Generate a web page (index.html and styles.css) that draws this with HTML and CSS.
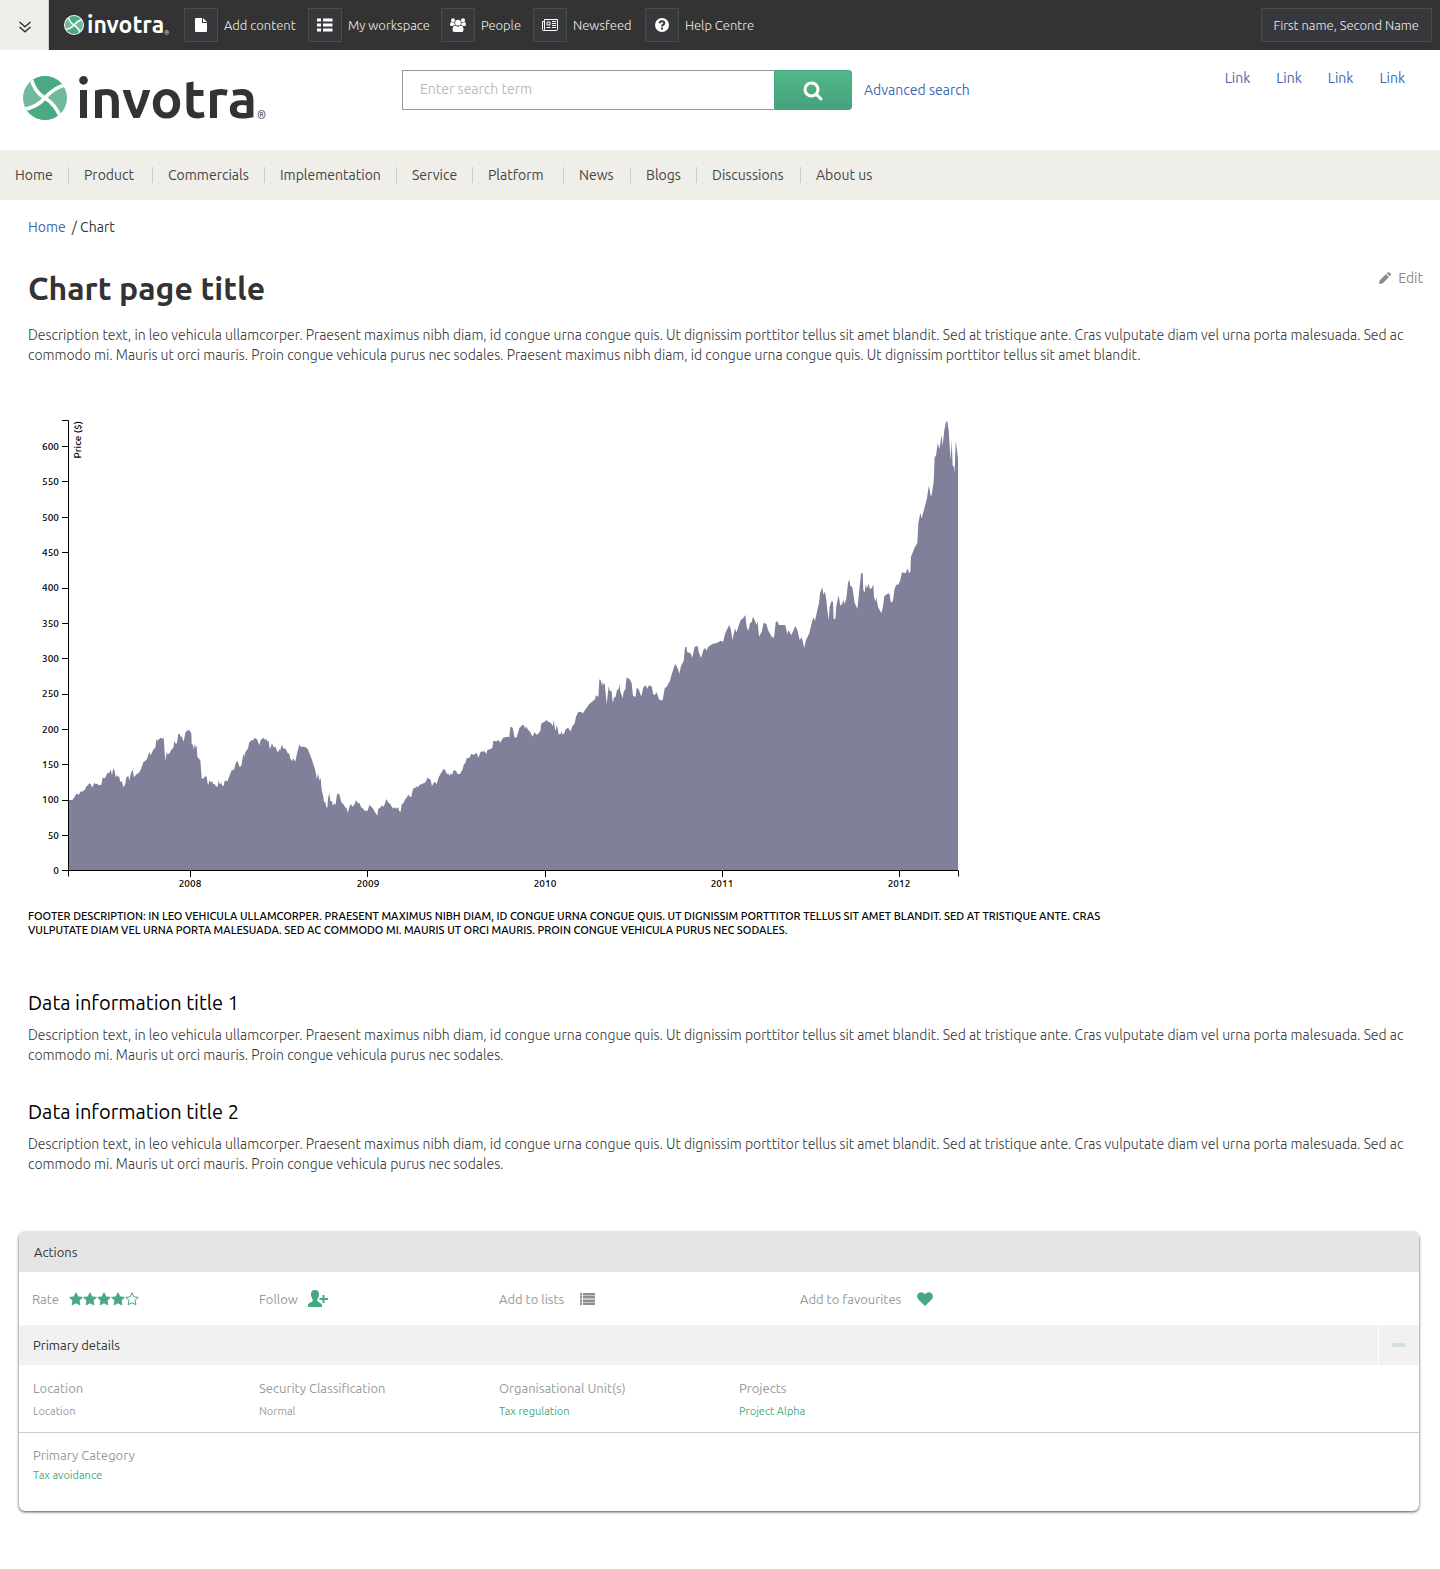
FILE: index.html
```html
<!DOCTYPE html>
<html lang="en">
<head>
<meta charset="utf-8">
<title>Chart page title</title>
<meta name="viewport" content="width=device-width, initial-scale=1">
<link rel="stylesheet" href="styles.css">
</head>
<body>
<svg class="defs" width="0" height="0" aria-hidden="true">
  <symbol id="emblem" viewBox="69 227 132 132">
    <clipPath id="disc"><circle cx="135" cy="293" r="66"/></clipPath>
    <g clip-path="url(#disc)">
      <rect x="69" y="227" width="132" height="132" fill="#6fba9a"/>
      <path fill="#4ba983" d="M90 220C98 265 118 284 135 293C150 275 170 257 205 251L205 220ZM65 328C100 325 120 310 135 293C155 305 172 322 184 355L184 370L65 370Z"/>
      <path class="emblem-gap" fill="none" stroke-width="11" d="M90 220C98 265 118 284 135 293C155 305 172 322 186 362M205 251C170 257 150 275 135 293C120 310 100 325 62 329"/>
    </g>
  </symbol>
  <symbol id="star" viewBox="0 0 14 14"><path stroke="#45a880" stroke-linejoin="round" d="M7 0.800L8.900 4.900L13.300 5.400L10 8.400L10.900 12.900L7 10.700L3.100 12.900L4 8.400L0.700 5.400L5.100 4.900Z"/></symbol>
</svg>

<div class="topbar">
  <button class="collapse" type="button" aria-label="Collapse toolbar">
    <svg width="12" height="12" viewBox="0 0 12 12" fill="none" stroke="#333" stroke-width="1.500"><path d="M0.500 1L6 5.800L11.500 1M0.500 6L6 10.800L11.500 6"/></svg>
  </button>
  <a class="brand brand-small" href="#"><svg class="emblem" width="20" height="20"><circle cx="10" cy="10" r="10" fill="#fff"/><use href="#emblem" x="1" y="1" width="18" height="18"/></svg><span class="wordmark">invotra</span><span class="reg">®</span></a>
  <nav class="tools" aria-label="Tools">
    <a href="#"><span class="tile"><svg width="12" height="14" viewBox="0 0 12 14" fill="#fff"><path d="M1 0H7V5H12V13Q12 14 11 14H1Q0 14 0 13V1Q0 0 1 0ZM8 0L12 4H8Z"/></svg></span>Add content</a>
    <a href="#"><span class="tile"><svg width="16" height="14" viewBox="0 0 16 14" fill="#fff"><path d="M0 0.500H4V3.500H0ZM6 0.500H15.500V3.500H6ZM0 5.500H4V8.500H0ZM6 5.500H15.500V8.500H6ZM0 10.500H4V13.500H0ZM6 10.500H15.500V13.500H6Z"/></svg></span>My workspace</a>
    <a href="#"><span class="tile"><svg width="16" height="14" viewBox="0 0 16 14" fill="#fff"><circle cx="3" cy="2.300" r="2"/><circle cx="13" cy="2.300" r="2"/><path d="M1.600 4C3 5 4 4.600 4.600 4.200C4.200 5.500 4.600 6.500 5.200 7C4 7 3.400 7.300 3 8H1.500Q0 8 0 6.500Q0 4 1.600 4ZM14.400 4C13 5 12 4.600 11.400 4.200C11.800 5.500 11.400 6.500 10.800 7C12 7 12.600 7.300 13 8H14.500Q16 8 16 6.500Q16 4 14.400 4Z"/><circle cx="8" cy="4.700" r="2.900"/><path d="M5 7.600Q8 9.800 11 7.600Q13.500 8 13.500 12Q13.500 14 11.500 14H4.500Q2.500 14 2.500 12Q2.500 8 5 7.600Z"/></svg></span>People</a>
    <a href="#"><span class="tile"><svg width="16" height="12" viewBox="0 0 16 12" fill="none" stroke="#fff"><path d="M2.500 0.500H15.500V10.500Q15.500 11.500 14.500 11.500H1.500Q0.500 11.500 0.500 10.500V2.500H2.500M2.500 0.500V10.500Q2.500 11.500 1.500 11.500M5 3H8V6H5ZM4.500 8.500H8.500M10 2.500H14M10 4.500H14M10 6.500H14M10 8.500H14"/></svg></span>Newsfeed</a>
    <a href="#"><span class="tile"><svg width="14" height="14" viewBox="0 0 14 14"><circle cx="7" cy="7" r="7" fill="#fff"/><path fill="none" stroke="#37383c" stroke-width="2" d="M4.500 5.200C4.800 3.800 5.800 3.300 7 3.300C8.500 3.300 9.300 4.200 9.300 5.200C9.300 6.700 7 6.700 7 8.600M7 9.600V11.500"/></svg></span>Help Centre</a>
  </nav>
  <button class="user" type="button">First name, Second Name</button>
</div>

<header class="header">
  <a class="brand" href="#"><svg class="emblem" width="44" height="44"><use href="#emblem" width="44" height="44"/></svg><span class="wordmark">invotra</span><span class="reg">®</span></a>
  <form class="search" role="search">
    <input type="search" placeholder="Enter search term" aria-label="Enter search term">
    <button type="button" aria-label="Search"><svg width="20" height="20" viewBox="0 0 20 20" fill="none" stroke="#fff" stroke-width="3"><circle cx="8.500" cy="8.500" r="6.500"/><path stroke-linecap="round" d="M13.500 13.500L18 18"/></svg></button>
  </form>
  <a class="advanced" href="#">Advanced search</a>
  <nav class="links" aria-label="Quick links"><a href="#">Link</a><a href="#">Link</a><a href="#">Link</a><a href="#">Link</a></nav>
</header>

<nav class="mainnav" aria-label="Main">
  <a href="#">Home</a><a href="#">Product</a><a href="#">Commercials</a><a href="#">Implementation</a><a href="#">Service</a><a href="#">Platform</a><a href="#">News</a><a href="#">Blogs</a><a href="#">Discussions</a><a href="#">About us</a>
</nav>

<main class="content">
  <nav class="crumbs" aria-label="Breadcrumb"><a href="#">Home</a><span>/ Chart</span></nav>
  <div class="titlebar">
    <h1>Chart page title</h1>
    <a class="edit" href="#"><svg width="12" height="12" viewBox="0 0 12 12" fill="#8a8a8a"><path d="M0 12L0.800 8.200L7 2L10 5L3.800 11.200ZM7.800 1.200L8.900 0.300Q9.700 -0.300 10.400 0.400L11.600 1.600Q12.300 2.300 11.700 3.100L10.800 4.200Z"/></svg>Edit</a>
  </div>
  <p>Description text, in leo vehicula ullamcorper. Praesent maximus nibh diam, id congue urna congue quis. Ut dignissim porttitor tellus sit amet blandit. Sed at tristique ante. Cras vulputate diam vel urna porta malesuada. Sed ac commodo mi. Mauris ut orci mauris. Proin congue vehicula purus nec sodales. Praesent maximus nibh diam, id congue urna congue quis. Ut dignissim porttitor tellus sit amet blandit.</p>

  <figure class="chart">
    <svg width="940" height="480" viewBox="28 412 940 480" role="img" aria-label="Price in dollars, 2007 to 2012">
      <svg x="68" y="410" width="890" height="460" viewBox="144 -840 2670 1380" preserveAspectRatio="none">
        <path fill="#80809b" d="M144 540L144 330 157 330 163 322 168 313 173 311 176 315 181 306 186 303 188 306 191 301 195 300 198 290 202 287 209 279 213 284 217 293 223 278 227 282 232 281 236 286 244 284 248 263 255 265 262 250 268 248 272 238 276 256 280 235 284 243 287 262 291 255 294 262 297 257 301 277 305 272 310 292 316 282 318 264 325 257 328 272 332 252 338 238 342 262 350 252 357 248 364 235 370 217 380 209 388 186 392 196 401 177 406 174 409 148 413 152 421 143 430 147 431 138 434 190 437 213 440 185 443 193 449 190 453 181 460 173 463 154 468 162 471 158 475 131 479 132 483 142 485 138 491 155 496 128 503 120 508 121 514 130 515 162 519 165 521 178 525 162 527 175 530 166 532 200 541 211 545 265 550 266 556 258 560 262 564 286 569 271 573 277 577 274 579 282 583 281 588 289 593 290 596 270 599 283 604 279 606 286 611 288 614 272 623 273 629 256 635 241 639 241 643 236 648 217 653 213 658 230 664 228 670 191 673 200 676 187 684 175 688 157 695 151 700 150 704 143 711 148 718 166 722 150 731 143 735 150 739 146 742 155 746 152 749 177 752 172 756 160 762 173 766 169 772 186 776 183 778 176 780 182 786 163 789 174 798 178 803 190 808 191 811 206 817 213 820 205 826 215 830 195 838 163 842 170 852 170 862 175 868 189 875 207 881 225 887 245 890 268 894 250 898 271 902 265 905 300 910 320 912 335 916 337 919 352 922 353 924 325 928 310 931 332 937 335 938 347 943 340 947 345 950 318 953 310 958 313 960 320 964 337 972 345 975 352 980 353 983 370 987 355 992 342 998 350 1002 345 1005 340 1008 330 1014 340 1019 340 1023 352 1028 355 1034 362 1043 362 1048 345 1058 354 1064 365 1072 377 1074 358 1082 352 1084 346 1088 350 1093 346 1099 327 1104 336 1111 343 1119 356 1125 351 1128 356 1135 352 1137 362 1142 365 1145 343 1151 339 1154 330 1161 322 1165 313 1169 320 1174 320 1178 300 1182 293 1186 295 1188 289 1194 292 1198 285 1207 281 1217 277 1223 262 1227 268 1231 267 1236 288 1243 275 1250 282 1256 262 1264 248 1271 237 1275 239 1281 253 1285 250 1288 257 1293 250 1296 256 1301 240 1308 243 1313 252 1320 252 1327 240 1332 222 1336 220 1340 205 1349 203 1353 192 1362 194 1370 188 1375 203 1382 185 1394 184 1399 192 1402 180 1410 178 1417 174 1420 153 1431 154 1436 150 1441 158 1449 143 1462 140 1468 142 1471 110 1478 113 1484 143 1490 142 1498 115 1507 105 1512 106 1515 117 1518 109 1524 119 1529 124 1538 140 1543 127 1548 132 1552 134 1561 123 1564 100 1573 96 1579 90 1585 95 1592 98 1599 108 1601 90 1606 123 1611 105 1616 133 1622 132 1624 123 1627 133 1633 130 1637 118 1644 113 1652 124 1657 109 1664 100 1668 80 1675 65 1683 66 1689 70 1695 60 1708 42 1725 28 1728 16 1735 21 1738 -32 1743 -28 1746 -12 1749 -24 1751 -16 1754 -20 1760 42 1766 -12 1769 2 1775 4 1778 38 1783 22 1787 20 1791 0 1796 -2 1798 -18 1801 4 1808 25 1811 5 1816 -2 1820 -38 1829 -32 1835 -20 1839 18 1847 20 1850 -7 1856 -2 1864 20 1870 -8 1878 -14 1881 -3 1887 -14 1896 -10 1899 12 1904 15 1910 7 1918 30 1928 31 1934 -5 1940 -10 1950 -28 1956 -50 1965 -78 1972 -68 1978 -49 1983 -72 1991 -87 1995 -128 1999 -130 2002 -113 2012 -110 2017 -97 2024 -130 2033 -132 2036 -115 2043 -96 2051 -122 2056 -126 2059 -118 2065 -130 2077 -138 2092 -142 2102 -148 2109 -144 2115 -168 2122 -184 2128 -195 2133 -180 2137 -150 2145 -185 2149 -172 2155 -190 2162 -210 2169 -215 2176 -225 2180 -190 2185 -177 2190 -200 2195 -203 2199 -220 2206 -205 2210 -195 2213 -207 2217 -160 2225 -175 2231 -202 2239 -198 2245 -178 2254 -162 2260 -155 2263 -165 2267 -203 2272 -206 2277 -195 2296 -195 2302 -167 2306 -180 2314 -164 2326 -192 2332 -180 2339 -150 2345 -158 2353 -127 2358 -150 2368 -170 2373 -192 2380 -218 2385 -208 2392 -240 2397 -260 2400 -290 2407 -308 2410 -287 2415 -295 2419 -270 2422 -240 2426 -210 2429 -250 2435 -268 2439 -264 2441 -213 2446 -213 2449 -252 2456 -284 2461 -252 2467 -260 2470 -270 2474 -258 2479 -275 2484 -320 2488 -332 2491 -313 2497 -308 2504 -262 2512 -243 2517 -290 2523 -350 2528 -350 2530 -300 2534 -292 2537 -317 2540 -305 2546 -318 2550 -302 2556 -307 2560 -317 2562 -278 2567 -265 2569 -278 2574 -250 2584 -230 2589 -250 2593 -282 2602 -288 2608 -290 2613 -262 2619 -268 2623 -300 2628 -315 2636 -317 2641 -330 2646 -353 2657 -350 2663 -365 2667 -350 2671 -355 2673 -400 2683 -425 2692 -442 2695 -500 2701 -532 2705 -515 2714 -548 2721 -575 2726 -612 2729 -600 2732 -582 2735 -585 2741 -625 2744 -700 2748 -702 2753 -742 2758 -722 2765 -765 2768 -732 2773 -780 2778 -804 2782 -806 2786 -780 2789 -730 2792 -690 2795 -750 2798 -673 2802 -670 2804 -650 2807 -748 2811 -720 2814 -693V540Z"/>
      </svg>
      <path class="axis" d="M62 420.500H68.500V876.500M62 870.500H958.500V876.500M62 446.500H68M62 481.500H68M62 517.500H68M62 552.500H68M62 588.500H68M62 623.500H68M62 658.500H68M62 694.500H68M62 729.500H68M62 764.500H68M62 800.500H68M62 835.500H68M190.500 871V877M367.500 871V877M545.500 871V877M722.500 871V877M899.500 871V877"/>
      <g class="ticks ticks-y">
        <text x="59" y="450">600</text><text x="59" y="485">550</text><text x="59" y="521">500</text><text x="59" y="556">450</text><text x="59" y="591">400</text><text x="59" y="627">350</text><text x="59" y="662">300</text><text x="59" y="697">250</text><text x="59" y="733">200</text><text x="59" y="768">150</text><text x="59" y="803">100</text><text x="59" y="839">50</text><text x="59" y="874">0</text>
        <text transform="translate(81 421) rotate(-90)">Price ($)</text>
      </g>
      <g class="ticks ticks-x">
        <text x="190" y="887">2008</text><text x="368" y="887">2009</text><text x="545" y="887">2010</text><text x="722" y="887">2011</text><text x="899" y="887">2012</text>
      </g>
    </svg>
    <figcaption>Footer description: in leo vehicula ullamcorper. Praesent maximus nibh diam, id congue urna congue quis. Ut dignissim porttitor tellus sit amet blandit. Sed at tristique ante. Cras vulputate diam vel urna porta malesuada. Sed ac commodo mi. Mauris ut orci mauris. Proin congue vehicula purus nec sodales.</figcaption>
  </figure>

  <section class="info">
    <h2>Data information title 1</h2>
    <p>Description text, in leo vehicula ullamcorper. Praesent maximus nibh diam, id congue urna congue quis. Ut dignissim porttitor tellus sit amet blandit. Sed at tristique ante. Cras vulputate diam vel urna porta malesuada. Sed ac commodo mi. Mauris ut orci mauris. Proin congue vehicula purus nec sodales.</p>
  </section>
  <section class="info">
    <h2>Data information title 2</h2>
    <p>Description text, in leo vehicula ullamcorper. Praesent maximus nibh diam, id congue urna congue quis. Ut dignissim porttitor tellus sit amet blandit. Sed at tristique ante. Cras vulputate diam vel urna porta malesuada. Sed ac commodo mi. Mauris ut orci mauris. Proin congue vehicula purus nec sodales.</p>
  </section>
</main>

<section class="card">
  <h3 class="card-head">Actions</h3>
  <div class="actions">
    <div class="action">Rate<span class="stars" role="img" aria-label="4 out of 5 stars"><svg width="14" height="14" fill="#45a880"><use href="#star"/></svg><svg width="14" height="14" fill="#45a880"><use href="#star"/></svg><svg width="14" height="14" fill="#45a880"><use href="#star"/></svg><svg width="14" height="14" fill="#45a880"><use href="#star"/></svg><svg width="14" height="14" fill="none"><use href="#star"/></svg></span></div>
    <button class="action" type="button">Follow<svg width="20" height="18" viewBox="0 0 20 18" fill="#45a880"><path d="M7 0C9.700 0 11 1.500 11 4C11 6.500 10.200 8 9.400 9V11C10.400 12.500 14 13 14 15V17H0V15C0 13 3.600 12.500 4.600 11V9C3.800 8 3 6.500 3 4C3 1.500 4.300 0 7 0ZM14.500 5H16.500V8H20V10H16.500V13H14.500V10H11.500V8H14.500Z"/></svg></button>
    <button class="action action-wide" type="button">Add to lists<svg width="15" height="12" viewBox="0 0 15 12" fill="#8f8f8f"><path d="M0 0H2V2H0ZM3 0H15V2H3ZM0 3H2V5H0ZM3 3H15V5H3ZM0 7H2V9H0ZM3 7H15V9H3ZM0 10H2V12H0ZM3 10H15V12H3Z"/><path fill-opacity=".5" d="M0 2H2V3H0ZM3 2H15V3H3ZM0 5H2V7H0ZM3 5H15V7H3ZM0 9H2V10H0ZM3 9H15V10H3Z"/></svg></button>
    <button class="action action-wide" type="button">Add to favourites<svg width="16" height="14" viewBox="0 0 16 14" fill="#45a880"><path d="M8 14L1.500 7.500C-0.500 5.500 0 2.500 1.500 1.200C3.500 -0.500 6.500 0 8 2.500C9.500 0 12.500 -0.500 14.500 1.200C16 2.500 16.500 5.500 14.500 7.500Z"/></svg></button>
  </div>
  <div class="card-head card-subhead"><h3>Primary details</h3><button type="button" aria-label="Collapse primary details"><svg width="14" height="4"><rect width="14" height="4" rx="1" fill="#d5dfe3"/></svg></button></div>
  <dl class="details">
    <div><dt>Location</dt><dd>Location</dd></div>
    <div><dt>Security Classification</dt><dd>Normal</dd></div>
    <div><dt>Organisational Unit(s)</dt><dd><a href="#">Tax regulation</a></dd></div>
    <div><dt>Projects</dt><dd><a href="#">Project Alpha</a></dd></div>
  </dl>
  <dl class="details details-last">
    <div><dt>Primary Category</dt><dd><a href="#">Tax avoidance</a></dd></div>
  </dl>
</section>
</body>
</html>
```
FILE: styles.css
```css
* { box-sizing: border-box; }
body {
  margin: 0;
  background: #fff;
  color: #333;
  font: 14px/20px Ubuntu, "Noto Sans", sans-serif;
}
a { color: #3c68ae; text-decoration: none; }
button, input { font: inherit; color: inherit; margin: 0; padding: 0; border: 0; background: none; }
h1, h2, h3, p, dl, dd, figure { margin: 0; font-weight: inherit; }
h3 { font-size: 13px; }
.defs { display: block; height: 0; }

/* Top toolbar */
.topbar { display: flex; align-items: center; height: 50px; background: #333; color: #eee; font-size: 13px; font-weight: 300; }
.topbar a { color: #eee; }
.collapse { display: flex; align-items: center; justify-content: center; flex: none; width: 49px; height: 50px; padding: 4px 0 0 2px; background: #efeee9; border-right: 1px solid #d0d0cc; }
.tools { display: grid; grid-template-columns: 124px 133px 92px 112px auto; white-space: nowrap; }
.tools a { display: flex; align-items: center; gap: 6px; }
.tile { display: flex; align-items: center; justify-content: center; flex: none; width: 34px; height: 34px; background: #37383c; border: 1px solid #4b4b4b; }
.user { margin-left: auto; margin-right: 8px; height: 34px; padding: 0 12px 0 11px; background: #37383c; border: 1px solid #4b4b4b; font-weight: 300; }

/* Brand */
.brand { display: flex; align-items: center; }
.header .brand { margin-top: 3px; }
.brand .wordmark { margin-left: 9px; color: #333; font: 700 54px/50px Ubuntu, Roboto, sans-serif; }
.brand .reg { align-self: flex-end; color: #333; font-size: 11px; line-height: 16px; }
.brand .emblem { flex: none; }
.emblem-gap { stroke: #fff; }
.brand-small { width: 119px; margin-left: 15px; margin-right: 1px; }
.brand-small .wordmark { margin-left: 3px; color: #fff; font-size: 23px; line-height: 24px; }
.brand-small .reg { color: #fff; font-size: 6px; line-height: 8px; }

/* Header */
.header { display: grid; grid-template-columns: 379px 450px 1fr auto; align-items: start; height: 100px; padding: 20px 35px 0 23px; }
.search { display: flex; height: 40px; }
.search input { flex: 1; min-width: 0; padding: 0 17px 2px; border: 1px solid #979797; border-right: 0; appearance: none; }
.search input::placeholder { color: #bbb; opacity: 1; }
.search button { display: flex; align-items: center; justify-content: center; width: 78px; padding-top: 2px; background: linear-gradient(#51b788, #45a37c); border: 1px solid #45a880; border-radius: 0 3px 3px 0; }
.advanced { margin: 10px 0 0 12px; }
.links { display: flex; gap: 26px; margin-top: -2px; }

/* Main navigation */
.mainnav { display: grid; grid-template-columns: 69px 84px 112px 132px 76px 91px 67px 66px 104px auto; align-items: center; height: 50px; background: #efeee9; }
.mainnav a { padding-left: 15px; color: #444; line-height: 16px; border-right: 1px solid #ccc; }
.mainnav a:last-child { border-right: 0; }

/* Content */
.content { padding: 17px 17px 0 28px; }
.crumbs { display: flex; gap: 6px; }
.titlebar { display: flex; align-items: flex-start; justify-content: space-between; margin-top: 29px; }
h1 { color: #333; font-size: 32px; line-height: 44px; font-weight: 600; }
.edit { display: flex; align-items: center; gap: 7px; padding-top: 2px; color: #8a8a8a; }
.content p { color: #333; font-weight: 300; padding-right: 8px; }
.titlebar + p { margin-top: 15px; }
.chart { margin-top: 47px; }
.chart > svg { display: block; max-width: 100%; }
.axis { fill: none; stroke: #000; }
.ticks { fill: #000; font-size: 10px; font-weight: 500; }
.ticks-y { text-anchor: end; }
.ticks-x { text-anchor: middle; }
figcaption { max-width: 1110px; margin-top: 17px; color: #000; font-size: 11px; line-height: 14px; font-weight: 500; text-transform: uppercase; }
h2 { color: #000; font-size: 20px; line-height: 28px; }
.info { margin-top: 33px; }
.info p { margin-top: 8px; }
.chart + .info { margin-top: 52px; }

/* Details card */
.card { margin: 58px 21px 58px 19px; background: #fff; border-radius: 6px; overflow: hidden; box-shadow: 0 1px 3px rgba(0, 0, 0, .7); color: #999; font-size: 13px; }
.card-head { height: 40px; padding: 0 15px; background: #e5e5e5; color: #333; line-height: 40px; }
.actions { display: grid; grid-template-columns: 227px 240px 301px auto; justify-content: start; align-items: center; height: 53px; padding-left: 13px; }
.action { display: flex; align-items: center; gap: 10px; }
.action-wide { gap: 16px; }
.stars { display: flex; }
.card-subhead { display: flex; justify-content: space-between; padding: 0 0 0 14px; background: #f1f1f1; }
.card-subhead button { display: flex; align-items: center; justify-content: center; width: 41px; border-left: 1px solid #fff; }
.details { display: grid; grid-template-columns: 226px 240px 240px auto; justify-content: start; padding: 13px 14px 11px; border-bottom: 1px solid #ccc; }
.details dd { margin-top: 3px; font-size: 11px; }
.details a { color: #45a880; }
.details-last { border-bottom: 0; padding: 12px 14px 26px; }
.details-last dd { margin-top: 0; }
```
